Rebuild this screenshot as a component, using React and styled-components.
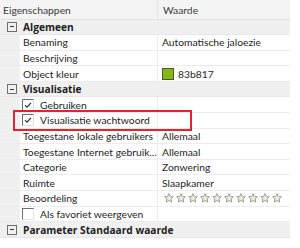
import React from 'react';
import styled, { createGlobalStyle } from 'styled-components';

const Global = createGlobalStyle`
  html, body {
    margin: 0;
    padding: 0;
    background: #ffffff;
  }
  body {
    font-family: Lato, "Open Sans", sans-serif;
    font-size: 10.3px;
    color: #1e1e1e;
  }
`;

const Panel = styled.div`
  position: relative;
  width: 290px;
  height: 248px;
  overflow: hidden;
`;

const Header = styled.div`
  display: grid;
  grid-template-columns: 157px 1fr;
  height: 19.5px;
  background: #f4f4f4;
  border-bottom: 1px solid #e2e2e2;
  box-sizing: border-box;
  color: #3a3a3a;
`;

const HeaderCell = styled.div`
  display: flex;
  align-items: center;
  padding-top: 1px;
  padding-left: ${p => p.$pad}px;
  border-left: ${p => (p.$divider ? '1px solid #e4e4e4' : 'none')};
`;

const Row = styled.div`
  display: grid;
  grid-template-columns: 20px 137px 1fr;
  height: 15.6px;
  box-sizing: border-box;
  border-bottom: 1px solid #ececec;
`;

const Gutter = styled.div`
  background: #f0f0f0;
`;

const NameCell = styled.div`
  display: flex;
  align-items: center;
  gap: 6px;
  padding-left: ${p => p.$pad || 3}px;
  white-space: nowrap;
  overflow: hidden;
`;

const ValueCell = styled.div`
  display: flex;
  align-items: center;
  gap: 4px;
  padding-left: 4px;
  border-left: 1px solid #ececec;
  white-space: nowrap;
`;

const CategoryRow = styled.div`
  display: flex;
  align-items: center;
  height: 15.6px;
  box-sizing: border-box;
  background: #f0f0f0;
  border-bottom: 1px solid #e6e6e6;
  font-family: "Open Sans", Lato, sans-serif;
  font-weight: 700;
  font-size: 10.2px;
  color: #222;
  white-space: nowrap;
`;

const Toggle = styled.div`
  width: 20px;
  flex: none;
  display: flex;
  justify-content: center;
  padding-left: 3px;
  box-sizing: border-box;
`;

const MinusBox = styled.span`
  position: relative;
  width: 8px;
  height: 8px;
  border: 1px solid #6e6e6e;
  box-sizing: content-box;
  &::after {
    content: '';
    position: absolute;
    left: 2px;
    right: 2px;
    top: 3.5px;
    height: 1px;
    background: #3a3a3a;
  }
`;

const CategoryLabel = styled.span`
  padding-left: 3px;
`;

const Check = styled.span`
  position: relative;
  width: 10px;
  height: 10px;
  flex: none;
  border-top: 1px solid #6f6f6f;
  border-left: 1px solid #6f6f6f;
  border-right: 1px solid #e2e2e2;
  border-bottom: 1px solid #e2e2e2;
  background: #fff;
  display: flex;
  align-items: center;
  justify-content: center;
`;

const Swatch = styled.span`
  width: 10px;
  height: 10px;
  background: ${p => p.$color};
  border: 1px solid #4a5a2a;
`;

const Stars = styled.div`
  display: flex;
  gap: 2px;
  padding-left: 2px;
`;

const Highlight = styled.div`
  position: absolute;
  left: 13px;
  top: 110px;
  width: 179px;
  height: 21px;
  border: 2px solid #e3242b;
  box-sizing: border-box;
  pointer-events: none;
`;

function Star() {
  return (
    <svg width="10" height="10" viewBox="0 0 10 10">
      <path
        d="M5 0.6 L6.3 3.5 L9.4 3.8 L7.1 5.9 L7.8 9.1 L5 7.5 L2.2 9.1 L2.9 5.9 L0.6 3.8 L3.7 3.5 Z"
        fill="#ecebe4"
        stroke="#9b9788"
        strokeWidth="0.9"
        strokeLinejoin="round"
      />
    </svg>
  );
}

function Tick() {
  return (
    <svg width="8" height="8" viewBox="0 0 8 8">
      <path d="M1 4.2 L3 6.2 L7 1.8" fill="none" stroke="#2a2a2a" strokeWidth="1.1" />
    </svg>
  );
}

function Category({ label }) {
  return (
    <CategoryRow>
      <Toggle>
        <MinusBox />
      </Toggle>
      <CategoryLabel>{label}</CategoryLabel>
    </CategoryRow>
  );
}

function Prop({ name, children }) {
  return (
    <Row>
      <Gutter />
      <NameCell>{name}</NameCell>
      <ValueCell>{children}</ValueCell>
    </Row>
  );
}

function CheckProp({ name, checked }) {
  return (
    <Row>
      <Gutter />
      <NameCell $pad={2}>
        <Check>{checked && <Tick />}</Check>
        {name}
      </NameCell>
      <ValueCell />
    </Row>
  );
}

export default function App() {
  return (
    <>
      <Global />
      <Panel>
        <Header>
          <HeaderCell $pad={3}>Eigenschappen</HeaderCell>
          <HeaderCell $pad={5} $divider>Waarde</HeaderCell>
        </Header>

        <Category label="Algemeen" />
        <Prop name="Benaming">Automatische jaloezie</Prop>
        <Prop name="Beschrijving" />
        <Prop name="Object kleur">
          <Swatch $color="#83b817" />
          83b817
        </Prop>

        <Category label="Visualisatie" />
        <CheckProp name="Gebruiken" checked />
        <CheckProp name="Visualisatie wachtwoord" checked />
        <Prop name="Toegestane lokale gebruikers">Allemaal</Prop>
        <Prop name="Toegestane Internet gebruik...">Allemaal</Prop>
        <Prop name="Categorie">Zonwering</Prop>
        <Prop name="Ruimte">Slaapkamer</Prop>
        <Prop name="Beoordeling">
          <Stars>
            {Array.from({ length: 10 }).map((_, i) => (
              <Star key={i} />
            ))}
          </Stars>
        </Prop>
        <CheckProp name="Als favoriet weergeven" />

        <Category label="Parameter Standaard waarde" />

        <Highlight />
      </Panel>
    </>
  );
}
